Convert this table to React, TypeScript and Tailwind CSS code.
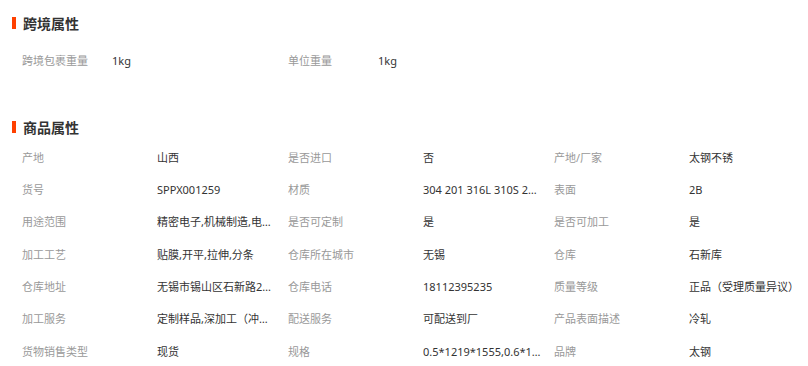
const font = { fontFamily: '"Noto Sans", "Noto Sans CJK SC", sans-serif' };

const crossBorder: [string, string][] = [
  ['跨境包裹重量', '1kg'],
  ['单位重量', '1kg'],
];

const attrs: [string, string][] = [
  ['产地', '山西'],
  ['是否进口', '否'],
  ['产地/厂家', '太钢不锈'],
  ['货号', 'SPPX001259'],
  ['材质', '304 201 316L 310S 2205 321 904L'],
  ['表面', '2B'],
  ['用途范围', '精密电子,机械制造,电梯装饰'],
  ['是否可定制', '是'],
  ['是否可加工', '是'],
  ['加工工艺', '贴膜,开平,拉伸,分条'],
  ['仓库所在城市', '无锡'],
  ['仓库', '石新库'],
  ['仓库地址', '无锡市锡山区石新路288号'],
  ['仓库电话', '18112395235'],
  ['质量等级', '正品（受理质量异议）'],
  ['加工服务', '定制样品,深加工（冲压）'],
  ['配送服务', '可配送到厂'],
  ['产品表面描述', '冷轧'],
  ['货物销售类型', '现货'],
  ['规格', '0.5*1219*1555,0.6*1219*2438'],
  ['品牌', '太钢'],
];

function Title({ text }: { text: string }) {
  return (
    <div className="flex h-5 items-center pl-3">
      <span className="h-3 w-1 bg-[#ff4000]" />
      <span className="ml-[7px] text-[14px] font-bold text-[#333]">{text}</span>
    </div>
  );
}

export default function App() {
  const rows: [string, string][][] = [];
  for (let i = 0; i < attrs.length; i += 3) rows.push(attrs.slice(i, i + 3));

  return (
    <div className="h-[366px] w-[808px] overflow-hidden bg-white pt-[13px]" style={font}>
      <Title text="跨境属性" />
      <div className="mt-3 flex h-8 items-center pl-[22px] text-[11px]">
        {crossBorder.map(([k, v]) => (
          <div key={k} className="flex w-[266px] shrink-0 items-center">
            <span className="w-[90px] shrink-0 text-[#999]">{k}</span>
            <span className="text-[#333]">{v}</span>
          </div>
        ))}
      </div>

      <div className="mt-10">
        <Title text="商品属性" />
      </div>
      <div className="mt-[5px] pl-[22px] text-[11px]">
        {rows.map((row, ri) => (
          <div key={ri} className="flex h-[32.3px] items-center">
            {row.map(([k, v], ci) => (
              <div key={k} className="flex w-[266px] shrink-0 items-center">
                <span className="w-[135px] shrink-0 text-[#999]">{k}</span>
                <span
                  className={
                    ci === 2
                      ? 'whitespace-nowrap text-[#333]'
                      : 'w-[118px] truncate text-[#333]'
                  }
                >
                  {v}
                </span>
              </div>
            ))}
          </div>
        ))}
      </div>
    </div>
  );
}
